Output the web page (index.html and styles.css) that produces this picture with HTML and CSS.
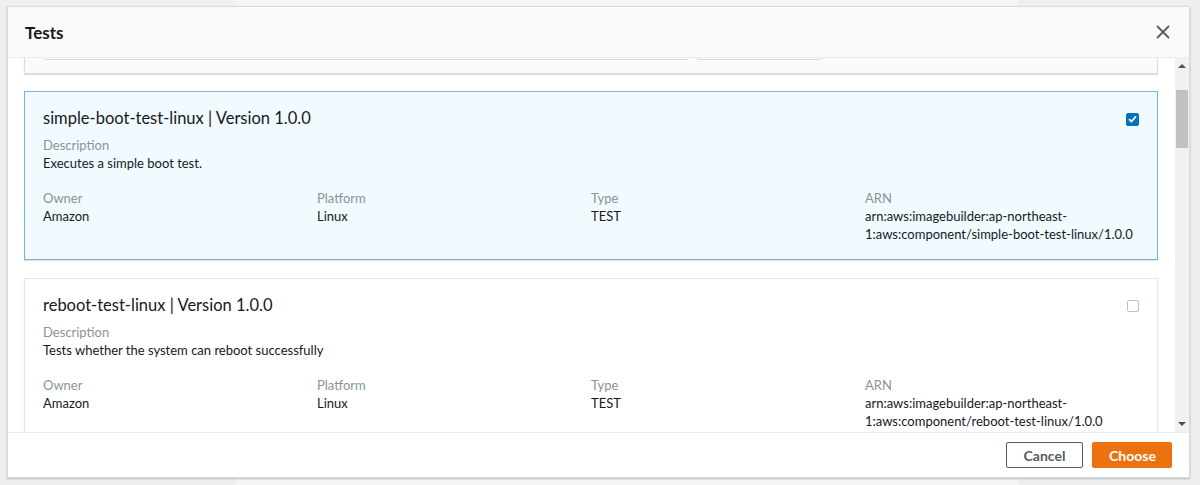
FILE: index.html
```html
<!DOCTYPE html>
<html lang="en">
<head>
<meta charset="utf-8">
<title>Tests</title>
<link rel="stylesheet" href="styles.css">
</head>
<body>
<div class="modal">
  <div class="modal-header">
    <h2 class="modal-title">Tests</h2>
    <button class="close" aria-label="Close">
      <svg width="14" height="14" viewBox="0 0 14 14"><path d="M1.5 1.5 L12.5 12.5 M12.5 1.5 L1.5 12.5" stroke="#545b64" stroke-width="1.8" fill="none" stroke-linecap="round"/></svg>
    </button>
  </div>
  <div class="modal-body">
    <div class="content">
      <div class="stub-card">
        <div class="stub-input wide"></div>
        <div class="stub-input narrow"></div>
      </div>

      <div class="tile selected">
        <div class="tile-head">
          <h3 class="tile-title">simple-boot-test-linux | Version 1.0.0</h3>
          <span class="check checked">
            <svg width="9" height="8" viewBox="0 0 9 8"><path d="M1 4.2 L3.4 6.5 L8 1.3" stroke="#fff" stroke-width="1.8" fill="none"/></svg>
          </span>
        </div>
        <div class="field">
          <div class="label">Description</div>
          <div class="value">Executes a simple boot test.</div>
        </div>
        <div class="grid">
          <div class="field"><div class="label">Owner</div><div class="value">Amazon</div></div>
          <div class="field"><div class="label">Platform</div><div class="value">Linux</div></div>
          <div class="field"><div class="label">Type</div><div class="value">TEST</div></div>
          <div class="field"><div class="label">ARN</div><div class="value">arn:aws:imagebuilder:ap-northeast-1:aws:component/simple-boot-test-linux/1.0.0</div></div>
        </div>
      </div>

      <div class="tile">
        <div class="tile-head">
          <h3 class="tile-title">reboot-test-linux | Version 1.0.0</h3>
          <span class="check"></span>
        </div>
        <div class="field">
          <div class="label">Description</div>
          <div class="value">Tests whether the system can reboot successfully</div>
        </div>
        <div class="grid">
          <div class="field"><div class="label">Owner</div><div class="value">Amazon</div></div>
          <div class="field"><div class="label">Platform</div><div class="value">Linux</div></div>
          <div class="field"><div class="label">Type</div><div class="value">TEST</div></div>
          <div class="field"><div class="label">ARN</div><div class="value">arn:aws:imagebuilder:ap-northeast-1:aws:component/reboot-test-linux/1.0.0</div></div>
        </div>
      </div>
    </div>
    <div class="scrollbar">
      <div class="arrow up"></div>
      <div class="track"><div class="thumb"></div></div>
      <div class="arrow down"></div>
    </div>
  </div>
  <div class="modal-footer">
    <button class="btn btn-cancel">Cancel</button>
    <button class="btn btn-primary">Choose</button>
  </div>
</div>
</body>
</html>
```
FILE: styles.css
```css
* { box-sizing: border-box; }
html, body { margin: 0; padding: 0; }
body {
  width: 1200px;
  height: 485px;
  overflow: hidden;
  padding-top: 6px;
  font-family: Lato, "Liberation Sans", sans-serif;
  color: #16191f;
  background: linear-gradient(to right, #efefef 0, #efefef 236px, #f5f5f5 236px, #f5f5f5 1019px, #efefef 1019px);
}
.modal {
  margin-left: 7px;
  width: 1183px;
  height: 472px;
  background: #fff;
  border: 1px solid #d9dbdb;
  box-shadow: 0 1px 2px rgba(0, 28, 36, 0.25);
  display: flex;
  flex-direction: column;
}
.modal-header {
  height: 51px;
  flex: none;
  background: #fafafa;
  border-bottom: 1px solid #eaeded;
  display: flex;
  align-items: center;
  justify-content: space-between;
  padding: 0 18px 0 17px;
}
.modal-title {
  margin: 0;
  font-size: 17px;
  font-weight: 700;
  color: #16191f;
}
.close {
  border: 0;
  background: none;
  padding: 0;
  width: 14px;
  height: 14px;
  display: flex;
  margin-right: 1px;
}
.modal-body {
  flex: 1;
  display: flex;
  overflow: hidden;
}
.content {
  flex: 1;
  padding: 0 17px 0 16px;
  overflow: hidden;
}
.stub-card {
  height: 16px;
  background: #fafafa;
  border: 1px solid #dadddd;
  border-top: 0;
  box-shadow: 0 1px 1px rgba(0, 28, 36, 0.15);
  display: flex;
  gap: 9px;
  padding-left: 18px;
  margin-bottom: 17px;
}
.stub-input {
  height: 2px;
  border-bottom: 1px solid #d5dbdb;
  border-left: 1px solid #e4e6e6;
  border-right: 1px solid #e4e6e6;
  border-radius: 0 0 3px 3px;
}
.stub-input.wide { width: 645px; }
.stub-input.narrow { width: 125px; }

.tile {
  border: 1px solid #e4e6e6;
  background: #fff;
  padding: 14px 18px 16px 18px;
  margin-bottom: 18px;
  box-shadow: 0 1px 1px rgba(0, 28, 36, 0.12);
}
.tile.selected {
  background: #f1faff;
  border-color: #7eb0d9;
}
.tile-head {
  display: flex;
  align-items: center;
  justify-content: space-between;
  height: 24px;
  margin-bottom: 6px;
}
.tile-title {
  margin: 0;
  font-size: 16.5px;
  font-weight: 400;
  line-height: 24px;
  color: #16191f;
}
.check {
  width: 12px;
  height: 12px;
  border: 1px solid #b6c2c3;
  border-radius: 2px;
  background: #fff;
  display: flex;
  align-items: center;
  justify-content: center;
  margin-top: 2px;
}
.check.checked {
  width: 13px;
  height: 13px;
  background: #0073bb;
  border-color: #0073bb;
}
.field { font-size: 13px; line-height: 18px; }
.label { color: #879596; }
.value { color: #16191f; }
.grid {
  display: grid;
  grid-template-columns: repeat(4, 274px);
  margin-top: 17px;
}

.scrollbar {
  width: 14px;
  flex: none;
  background: #f1f1f1;
  display: flex;
  flex-direction: column;
  align-items: center;
}
.arrow {
  width: 0;
  height: 0;
  border-left: 4px solid transparent;
  border-right: 4px solid transparent;
}
.arrow.up { border-bottom: 4px solid #505050; margin-top: 6px; }
.arrow.down { border-top: 4px solid #505050; margin-bottom: 6px; }
.track { flex: 1; width: 100%; padding: 0 1px; }
.thumb { margin-top: 22px; height: 58px; background: #c1c1c1; }

.modal-footer {
  height: 45px;
  flex: none;
  border-top: 1px solid #eaeded;
  display: flex;
  align-items: center;
  justify-content: flex-end;
  gap: 9px;
  padding: 0 17px 0 0;
}
.btn {
  height: 26px;
  font-family: Lato, "Liberation Sans", sans-serif;
  font-size: 14px;
  font-weight: 700;
  border-radius: 2px;
  padding: 0 16px;
  cursor: pointer;
}
.btn-cancel {
  background: #fff;
  color: #545b64;
  border: 1px solid #545b64;
  width: 77px;
}
.btn-primary {
  background: #ec7211;
  color: #fff;
  border: 1px solid #ec7211;
  width: 80px;
}
```
